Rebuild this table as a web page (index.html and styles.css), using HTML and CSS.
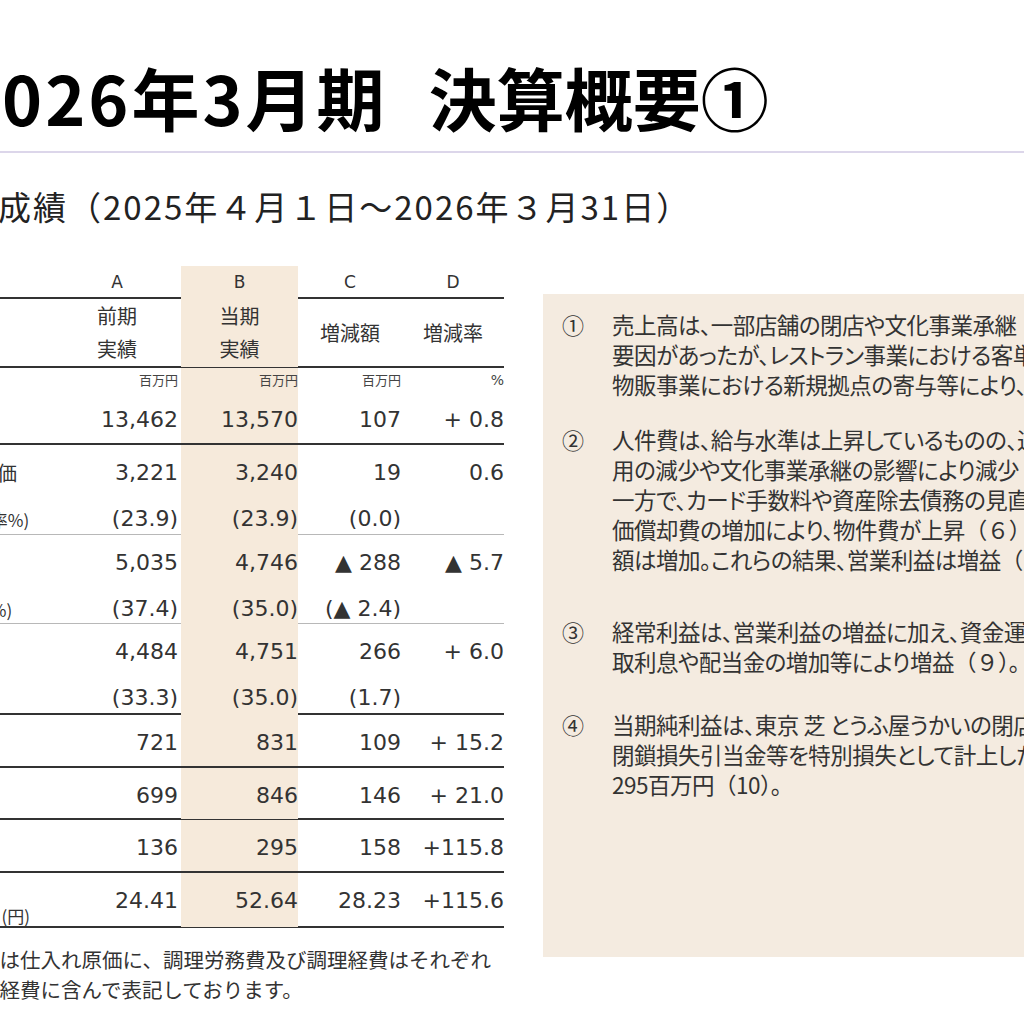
FILE: index.html
```html
<!DOCTYPE html>
<html lang="ja">
<head>
<meta charset="utf-8">
<title>2026年3月期 決算概要①</title>
<link rel="stylesheet" href="styles.css">
</head>
<body>
<div class="slide">
  <h1 class="title"><span class="t1">2026年3月期</span><span class="gap">　</span>決算概要①</h1>
  <div class="rule"></div>
  <h2 class="subtitle">経営成績（2025年４月１日～2026年３月31日）</h2>

  <div class="content">
    <div class="left">
      <div class="tbl">
        <div class="row letters">
          <div class="lab"></div>
          <div class="h">A</div>
          <div class="h b">B</div>
          <div class="h">C</div>
          <div class="h">D</div>
        </div>
        <div class="row head">
          <div class="lab"></div>
          <div class="hh">前期<br>実績</div>
          <div class="hh b">当期<br>実績</div>
          <div class="hh">増減額</div>
          <div class="hh">増減率</div>
        </div>
        <div class="row units">
          <div class="lab"></div>
          <div class="u ca">百万円</div>
          <div class="u cb b">百万円</div>
          <div class="u cc">百万円</div>
          <div class="u cd pct">%</div>
        </div>
        <div class="row r1">
          <div class="lab">売上高</div>
          <div class="v ca">13,462</div>
          <div class="v cb b">13,570</div>
          <div class="v cc">107</div>
          <div class="v cd">+ 0.8</div>
        </div>
        <div class="row r2 thin">
          <div class="lab ind">売上原価<br><span class="sub">(売上原価率%)</span></div>
          <div class="v ca">3,221<br>(23.9)</div>
          <div class="v cb b">3,240<br>(23.9)</div>
          <div class="v cc">19<br>(0.0)</div>
          <div class="v cd">0.6</div>
        </div>
        <div class="row r2b thin">
          <div class="lab ind">人件費<br><span class="sub">(人件費率%)</span></div>
          <div class="v ca">5,035<br>(37.4)</div>
          <div class="v cb b">4,746<br>(35.0)</div>
          <div class="v cc">▲ 288<br>(▲ 2.4)</div>
          <div class="v cd">▲ 5.7</div>
        </div>
        <div class="row r3">
          <div class="lab ind">経費<br><span class="sub">(経費率%)</span></div>
          <div class="v ca">4,484<br>(33.3)</div>
          <div class="v cb b">4,751<br>(35.0)</div>
          <div class="v cc">266<br>(1.7)</div>
          <div class="v cd">+ 6.0</div>
        </div>
        <div class="row r1">
          <div class="lab">営業利益</div>
          <div class="v ca">721</div>
          <div class="v cb b">831</div>
          <div class="v cc">109</div>
          <div class="v cd">+ 15.2</div>
        </div>
        <div class="row r1s">
          <div class="lab">経常利益</div>
          <div class="v ca">699</div>
          <div class="v cb b">846</div>
          <div class="v cc">146</div>
          <div class="v cd">+ 21.0</div>
        </div>
        <div class="row r1">
          <div class="lab">当期純利益</div>
          <div class="v ca">136</div>
          <div class="v cb b">295</div>
          <div class="v cc">158</div>
          <div class="v cd">+115.8</div>
        </div>
        <div class="row r4">
          <div class="lab eps"><span class="eps1">1株当たり</span><span class="eps2">当期純利益 (円)</span></div>
          <div class="v ca">24.41</div>
          <div class="v cb b">52.64</div>
          <div class="v cc">28.23</div>
          <div class="v cd">+115.6</div>
        </div>
      </div>
      <p class="note">※売上原価は仕入れ原価に、調理労務費及び調理経費はそれぞれ<br>人件費及び経費に含んで表記しております。</p>
    </div>

    <div class="panel">
      <div class="item i1">
        <div class="num">①</div>
        <div class="txt">売上高は、一部店舗の閉店や文化事業承継<br>要因があったが、レストラン事業における客単価<br>物販事業における新規拠点の寄与等により、増収</div>
      </div>
      <div class="item i2">
        <div class="num">②</div>
        <div class="txt">人件費は、給与水準は上昇しているものの、退<br>用の減少や文化事業承継の影響により減少<br>一方で、カード手数料や資産除去債務の見直<br>価償却費の増加により、物件費が上昇<span class="fw">（６）</span><br>額は増加。これらの結果、営業利益は増益<span class="fw">（７）</span></div>
      </div>
      <div class="item i3">
        <div class="num">③</div>
        <div class="txt">経常利益は、営業利益の増益に加え、資金運<br>取利息や配当金の増加等により増益<span class="fw">（９）。</span></div>
      </div>
      <div class="item i4">
        <div class="num">④</div>
        <div class="txt">当期純利益は、東京 芝 とうふ屋うかいの閉店<br>閉鎖損失引当金等を特別損失として計上した<br>295百万円<span class="fw">（10）。</span></div>
      </div>
    </div>
  </div>
</div>
</body>
</html>
```

FILE: styles.css
```css
* {
  box-sizing: border-box;
  margin: 0;
  padding: 0;
}

html, body {
  width: 1024px;
  height: 1024px;
  overflow: hidden;
  background: #ffffff;
}

body {
  font-family: "Noto Sans CJK JP", "Noto Sans", sans-serif;
  color: #333333;
}

.slide {
  margin-left: -103px;
  width: 1240px;
  padding-top: 57px;
}

.title {
  font-size: 68px;
  font-weight: 700;
  line-height: 80px;
  color: #000000;
  padding-left: 62px;
  white-space: nowrap;
}

.title .t1 {
  letter-spacing: 3px;
}

.title .gap {
  letter-spacing: -27px;
}

.rule {
  height: 2px;
  background: #dcd6ea;
  margin-top: 14px;
}

.subtitle {
  margin-top: 33px;
  padding-left: 31px;
  font-size: 33px;
  font-weight: 400;
  line-height: 40px;
  letter-spacing: 2px;
  color: #222222;
  white-space: nowrap;
}

.content {
  display: flex;
  align-items: flex-start;
  margin-top: 40px;
}

.left {
  width: 607px;
  flex: none;
}

/* ---------- table ---------- */
.row {
  display: grid;
  grid-template-columns: 156px 128px 117px 104px 102px;
  border-bottom: 2px solid #333333;
}

.row.thin {
  border-bottom: 1px solid #b8b8b8;
}

.b {
  background: #f6eadb;
}

.letters { height: 33px; }
.head { height: 69px; }
.units { height: 24px; border-bottom: none; }
.r1 { height: 53px; }
.r1s { height: 52px; }
.r2 { height: 90px; }
.r2b { height: 89px; }
.r3 { height: 91px; }
.r4 { height: 55px; }

.h {
  font-family: "DejaVu Sans", sans-serif;
  font-size: 17px;
  line-height: 33px;
  text-align: center;
  color: #333333;
}

.hh {
  display: flex;
  align-items: center;
  justify-content: center;
  text-align: center;
  font-size: 20px;
  line-height: 33px;
  color: #333333;
  padding-bottom: 2px;
}

.u {
  font-size: 13px;
  line-height: 24px;
  text-align: right;
  color: #444444;
}

.u.pct {
  font-family: "DejaVu Sans", sans-serif;
  font-size: 14px;
}

.v {
  font-family: "DejaVu Sans", sans-serif;
  font-size: 22px;
  line-height: 46px;
  padding-top: 5px;
  text-align: right;
  white-space: nowrap;
  color: #333333;
}

.ca { padding-right: 3px; }
.cb { padding-right: 0; }
.cc { padding-right: 1px; }
.cd { padding-right: 0; }

.lab {
  font-size: 20px;
  line-height: 46px;
  padding-top: 5px;
  white-space: nowrap;
  color: #333333;
}

.lab.ind {
  padding-left: 40px;
}

.lab .sub {
  display: inline-block;
  margin-left: -20px;
  font-size: 17px;
}

.lab.eps {
  display: flex;
  flex-direction: column;
  padding-top: 10px;
  padding-right: 23px;
  font-size: 17px;
  line-height: 22px;
}

.eps1 {
  align-self: flex-start;
}

.eps2 {
  align-self: flex-end;
}

.note {
  margin-top: 16px;
  font-size: 20.5px;
  line-height: 30px;
  white-space: nowrap;
  color: #333333;
}

/* ---------- panel ---------- */
.panel {
  flex: none;
  width: 600px;
  height: 663px;
  margin-left: 39px;
  margin-top: 28px;
  background: #f4ebe0;
  padding: 15px 0 0 19px;
}

.item {
  display: flex;
  font-size: 22.5px;
  line-height: 30px;
  color: #333333;
}

.i2 { margin-top: 25px; }
.i3 { margin-top: 42px; }
.i4 { margin-top: 33px; }

.num {
  width: 50px;
  flex: none;
  font-size: 22px;
}

.txt {
  white-space: nowrap;
  letter-spacing: -0.5px;
  font-feature-settings: "palt";
}

.fw {
  font-feature-settings: normal;
}
```
